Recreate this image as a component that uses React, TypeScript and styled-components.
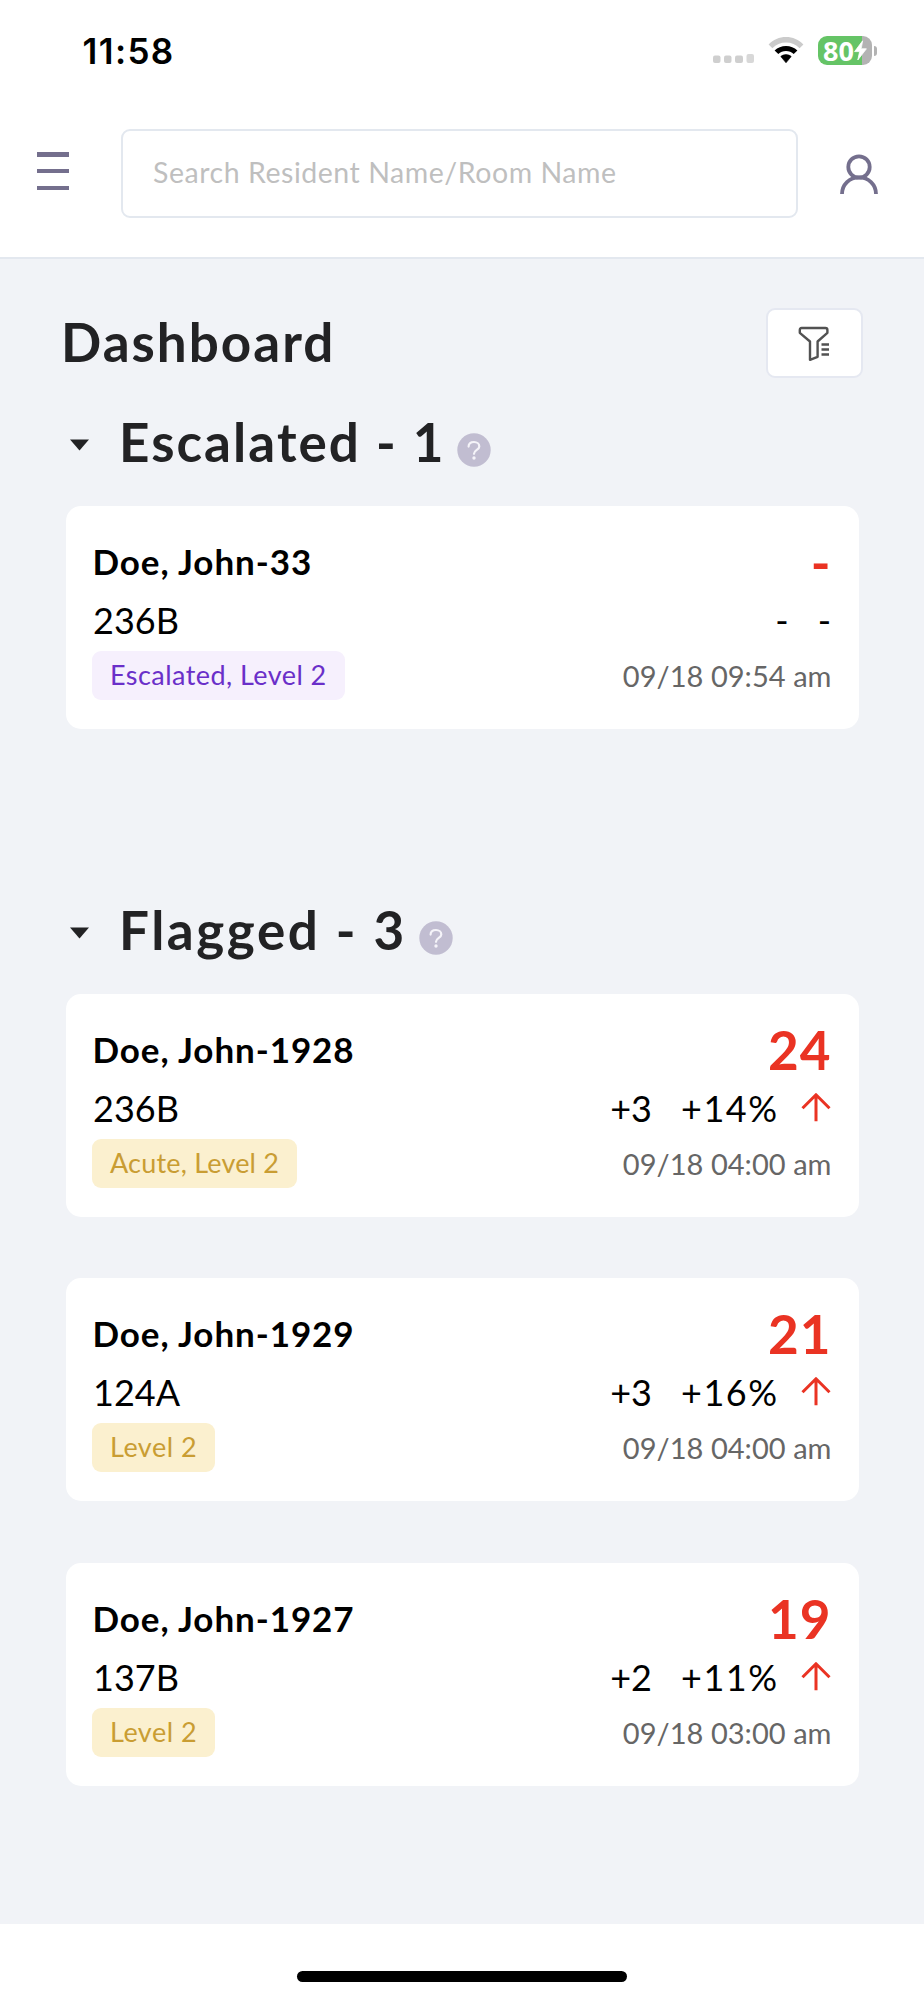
import React from 'react';
import styled, { createGlobalStyle } from 'styled-components';

const GlobalStyle = createGlobalStyle`
  *, *::before, *::after { box-sizing: border-box; }
  body {
    margin: 0;
    background: #fff;
    font-family: Lato, "Open Sans", sans-serif;
  }
  h1, h2, p { margin: 0; }
`;

const Screen = styled.div`
  display: flex;
  flex-direction: column;
  width: 924px;
  height: 2000px;
  overflow: hidden;
  background: #fff;
`;

/* ---------- status bar ---------- */

const StatusBar = styled.div`
  display: flex;
  justify-content: space-between;
  align-items: center;
  height: 101px;
  padding: 0 47px 0 82.5px;
`;

const Clock = styled.span`
  font: 600 35px/42px Inter, sans-serif;
  letter-spacing: 1.4px;
`;

const StatusIcons = styled.div`
  display: flex;
  align-items: center;
`;

const WifiSvg = styled.svg`
  margin: 0 14px 0 13px;
`;

const Battery = styled.div`
  display: flex;
  align-items: center;
  justify-content: center;
  width: 54px;
  height: 29px;
  border-radius: 9px;
  background: linear-gradient(90deg, #65c466 0 44px, #b3b3b3 44px);
  color: #fff;
  font: 700 27px/29px "Open Sans", sans-serif;
`;

const BatteryTip = styled.span`
  width: 3px;
  height: 10px;
  margin-left: 2px;
  border-radius: 0 4px 4px 0;
  background: #b3b3b3;
`;

/* ---------- header ---------- */

const Header = styled.header`
  display: flex;
  align-items: flex-start;
  height: 158px;
  padding: 28px 45px 0 37px;
  border-bottom: 2px solid #e3e8ef;
`;

const MenuButton = styled.button`
  display: flex;
  flex-direction: column;
  justify-content: space-between;
  width: 32px;
  height: 38px;
  margin: 23px 52px 0 0;
  padding: 0;
  border: 0;
  background: none;
`;

const MenuBar = styled.span`
  width: 32px;
  height: 4.500px;
  background: #746f8d;
`;

const SearchInput = styled.input`
  width: 677px;
  height: 89px;
  padding: 0 30px 4px;
  border: 2px solid #e3e8ef;
  border-radius: 9px;
  background: #fff;
  font: 400 28.5px/40px Lato, sans-serif;
  letter-spacing: 0.54px;
  outline: none;
  &::placeholder { color: #bfbfbf; opacity: 1; }
`;

const ProfileSvg = styled.svg`
  margin: 24px 0 0 42px;
`;

/* ---------- content ---------- */

const Main = styled.main`
  flex: none;
  height: 1665px;
  padding: 49px 61.500px 0 61px;
  background: #f1f3f7;
`;

const TitleRow = styled.div`
  display: flex;
  justify-content: space-between;
  height: 70px;
`;

const PageTitle = styled.h1`
  font-size: 53px;
  line-height: 68px;
  letter-spacing: 2px;
  color: #222224;
`;

const FilterButton = styled.button`
  display: grid;
  place-items: center;
  width: 97px;
  height: 70px;
  padding: 1px 0 0;
  border: 2px solid #e5e8f1;
  border-radius: 9px;
  background: #fff;
`;

const Section = styled.section<{ $offset: number }>`
  margin: ${(p) => p.$offset}px 4px 0 5px;
`;

const SectionHeader = styled.div`
  display: flex;
  align-items: center;
  height: 60px;
  margin-bottom: 35px;
  padding-left: 3.500px;
`;

const CaretSvg = styled.svg`
  margin: 7px 30.500px 0 0;
`;

const SectionTitle = styled.h2<{ $tracking: number }>`
  padding-top: 2px;
  font-size: 53px;
  line-height: 60px;
  letter-spacing: ${(p) => p.$tracking}px;
  color: #222224;
`;

const HelpSvg = styled.svg`
  margin: 17px 0 0 12px;
`;

const CardList = styled.div`
  display: flex;
  flex-direction: column;
  gap: 61.25px;
`;

const Card = styled.article`
  display: flex;
  justify-content: space-between;
  height: 223px;
  padding: 26px 27px 0 26px;
  border-radius: 15px;
  background: #fff;
  color: #000;
`;

const Details = styled.div`
  display: flex;
  flex-direction: column;
  align-items: flex-start;
`;

const Reading = styled.div`
  display: flex;
  flex-direction: column;
  align-items: flex-end;
`;

const Name = styled.p`
  padding-left: 0.500px;
  font-size: 35px;
  line-height: 59px;
  font-weight: 700;
  letter-spacing: 0.92px;
`;

const Room = styled.p`
  padding-left: 1px;
  font-size: 36px;
  line-height: 58px;
`;

const Tag = styled.span<{ $tone: 'purple' | 'amber'; $tracking: number }>`
  height: 49px;
  margin-top: 2px;
  padding: 0 18px;
  border-radius: 9px;
  font-size: 27px;
  line-height: 48px;
  letter-spacing: ${(p) => p.$tracking}px;
  background: ${(p) => (p.$tone === 'purple' ? '#f6f0fd' : '#fbf0cf')};
  color: ${(p) => (p.$tone === 'purple' ? '#6a2fc9' : '#c99d33')};
`;

const Score = styled.p`
  font-size: 53px;
  line-height: 59px;
  font-weight: 700;
  letter-spacing: 1px;
  color: #ea3323;
`;

const Trend = styled.div`
  display: flex;
  align-items: center;
  height: 58px;
  font-size: 36px;
  line-height: 58px;
`;

const Percent = styled.span<{ $tracking: number }>`
  margin-left: 29px;
  letter-spacing: ${(p) => p.$tracking}px;
`;

const ArrowSvg = styled.svg`
  margin: 0 1px 2px 22px;
`;

const Time = styled.p`
  font-size: 29px;
  line-height: 54px;
  letter-spacing: 0.05px;
  color: #666;
`;

/* ---------- footer ---------- */

const Footer = styled.footer`
  display: flex;
  justify-content: center;
  height: 76px;
  padding-top: 47px;
`;

const HomeIndicator = styled.span`
  width: 330px;
  height: 11px;
  border-radius: 6px;
  background: #000;
`;

/* ---------- icons ---------- */

const SignalIcon = () => (
  <svg width="42" height="29" viewBox="0 0 42 29" fill="#cfcfcf">
    <rect x="0" y="19.500" width="7.5" height="7.5" rx="2" />
    <rect x="11" y="19.500" width="7.5" height="7.5" rx="2" />
    <rect x="22" y="19.500" width="8" height="7.5" rx="2" />
    <rect x="33.5" y="18" width="7.5" height="9" rx="2" fill="#d8d8d8" />
  </svg>
);

const WifiIcon = () => (
  <WifiSvg width="36" height="29" viewBox="0 0 36 29">
    <path
      d="M0.6 8.6C5.2 3.6 11.3 1 18 1S30.8 3.6 35.4 8.6L31.6 12.2C28 8.4 23.3 6.4 18 6.4S8 8.4 4.4 12.2Z"
      fill="#cbcbcb"
    />
    <path
      d="M6.6 14.4C9.6 11.5 13.6 9.9 18 9.9S26.4 11.5 29.4 14.4L25.7 18C23.6 16.1 21 15.1 18 15.1S12.4 16.1 10.3 18Z"
      fill="#000"
    />
    <path
      d="M12.8 20.5C14.2 19.3 16 18.6 18 18.6S21.8 19.3 23.2 20.5L18 26.8Z"
      fill="#000"
      stroke="#000"
      strokeWidth="0.6"
      strokeLinejoin="round"
    />
  </WifiSvg>
);

const BoltIcon = () => (
  <svg width="13" height="21" viewBox="0 0 13 21">
    <path
      d="M8.6 0.8L0.6 11.6H5.6L3.8 20L12.4 8.8H7.2Z"
      fill="#fff"
      stroke="#fff"
      strokeWidth="0.8"
      strokeLinejoin="round"
    />
  </svg>
);

const ProfileIcon = () => (
  <ProfileSvg width="38" height="42" viewBox="0 0 38 42" fill="none" stroke="#746f8d" strokeWidth="3.8">
    <circle cx="19" cy="14" r="10.7" />
    <path d="M2 41C2 31.4 9.6 24.3 19 24.3S36 31.4 36 41" />
  </ProfileSvg>
);

const FilterIcon = () => (
  <svg width="32" height="36" viewBox="0 0 32 36" fill="none" stroke="#525252" strokeWidth="2.4" strokeLinejoin="round">
    <path d="M3.6 2H27.4Q29.4 2 29.4 4V6.8L19.6 15.5V30.8L12 33.8V15.5L1.8 6.8V4Q1.8 2 3.6 2Z" />
    <path d="M23.5 18.5H31M23.5 23.5H31M23.5 28.5H31" strokeWidth="2.6" />
  </svg>
);

const CaretIcon = () => (
  <CaretSvg width="19" height="12" viewBox="0 0 19 12">
    <path d="M0 0.4H19L9.5 11.6Z" fill="#222224" />
  </CaretSvg>
);

const HelpIcon = () => (
  <HelpSvg width="34" height="34" viewBox="0 0 34 34" fill="none">
    <circle cx="17" cy="17" r="16.7" fill="#c1bdd1" />
    <path
      d="M11.6 13.6C11.6 10.7 13.9 9 17 9S22.3 10.9 22.3 13.4C22.3 16.8 17 17 17 20.8"
      stroke="#f5f4f9"
      strokeWidth="2.2"
      strokeLinecap="round"
      strokeLinejoin="round"
    />
    <circle cx="17" cy="25" r="1.7" fill="#f5f4f9" />
  </HelpSvg>
);

const ArrowUpIcon = () => (
  <ArrowSvg width="30" height="30" viewBox="0 0 30 30" fill="none" stroke="#ea3323" strokeWidth="3">
    <path d="M15 29.3V2.5M1.5 16.3L15 2.7L28.5 16.3" strokeLinejoin="round" />
  </ArrowSvg>
);

/* ---------- data ---------- */

interface Resident {
  name: string;
  room: string;
  tag: string;
  tagTracking: number;
  score: string;
  delta: string;
  percent: string;
  rising?: boolean;
  time: string;
}

const escalated: Resident[] = [
  { name: 'Doe, John-33', room: '236B', tag: 'Escalated, Level 2', tagTracking: 0.45, score: '-', delta: '-', percent: '-', time: '09/18 09:54 am' },
];

const flagged: Resident[] = [
  { name: 'Doe, John-1928', room: '236B', tag: 'Acute, Level 2', tagTracking: 0.2, score: '24', delta: '+3', percent: '+14%', rising: true, time: '09/18 04:00 am' },
  { name: 'Doe, John-1929', room: '124A', tag: 'Level 2', tagTracking: 0.5, score: '21', delta: '+3', percent: '+16%', rising: true, time: '09/18 04:00 am' },
  { name: 'Doe, John-1927', room: '137B', tag: 'Level 2', tagTracking: 0.5, score: '19', delta: '+2', percent: '+11%', rising: true, time: '09/18 03:00 am' },
];

const ResidentCard = ({ resident, tone }: { resident: Resident; tone: 'purple' | 'amber' }) => (
  <Card>
    <Details>
      <Name>{resident.name}</Name>
      <Room>{resident.room}</Room>
      <Tag $tone={tone} $tracking={resident.tagTracking}>
        {resident.tag}
      </Tag>
    </Details>
    <Reading>
      <Score>{resident.score}</Score>
      <Trend>
        <span>{resident.delta}</span>
        <Percent $tracking={resident.rising ? 1.5 : 0.5}>{resident.percent}</Percent>
        {resident.rising && <ArrowUpIcon />}
      </Trend>
      <Time>{resident.time}</Time>
    </Reading>
  </Card>
);

interface GroupProps {
  title: string;
  tracking: number;
  offset: number;
  tone: 'purple' | 'amber';
  residents: Resident[];
}

const ResidentGroup = ({ title, tracking, offset, tone, residents }: GroupProps) => (
  <Section $offset={offset}>
    <SectionHeader>
      <CaretIcon />
      <SectionTitle $tracking={tracking}>{title}</SectionTitle>
      <HelpIcon />
    </SectionHeader>
    <CardList>
      {residents.map((r) => (
        <ResidentCard key={r.name} resident={r} tone={tone} />
      ))}
    </CardList>
  </Section>
);

export default function App() {
  return (
    <>
      <GlobalStyle />
      <Screen>
        <StatusBar>
          <Clock>11:58</Clock>
          <StatusIcons>
            <SignalIcon />
            <WifiIcon />
            <Battery>
              80
              <BoltIcon />
            </Battery>
            <BatteryTip />
          </StatusIcons>
        </StatusBar>
        <Header>
          <MenuButton aria-label="Menu">
            <MenuBar />
            <MenuBar />
            <MenuBar />
          </MenuButton>
          <SearchInput placeholder="Search Resident Name/Room Name" />
          <ProfileIcon />
        </Header>
        <Main>
          <TitleRow>
            <PageTitle>Dashboard</PageTitle>
            <FilterButton aria-label="Filter">
              <FilterIcon />
            </FilterButton>
          </TitleRow>
          <ResidentGroup title="Escalated - 1" tracking={2.06} offset={33} tone="purple" residents={escalated} />
          <ResidentGroup title="Flagged - 3" tracking={2.56} offset={170} tone="amber" residents={flagged} />
        </Main>
        <Footer>
          <HomeIndicator />
        </Footer>
      </Screen>
    </>
  );
}
